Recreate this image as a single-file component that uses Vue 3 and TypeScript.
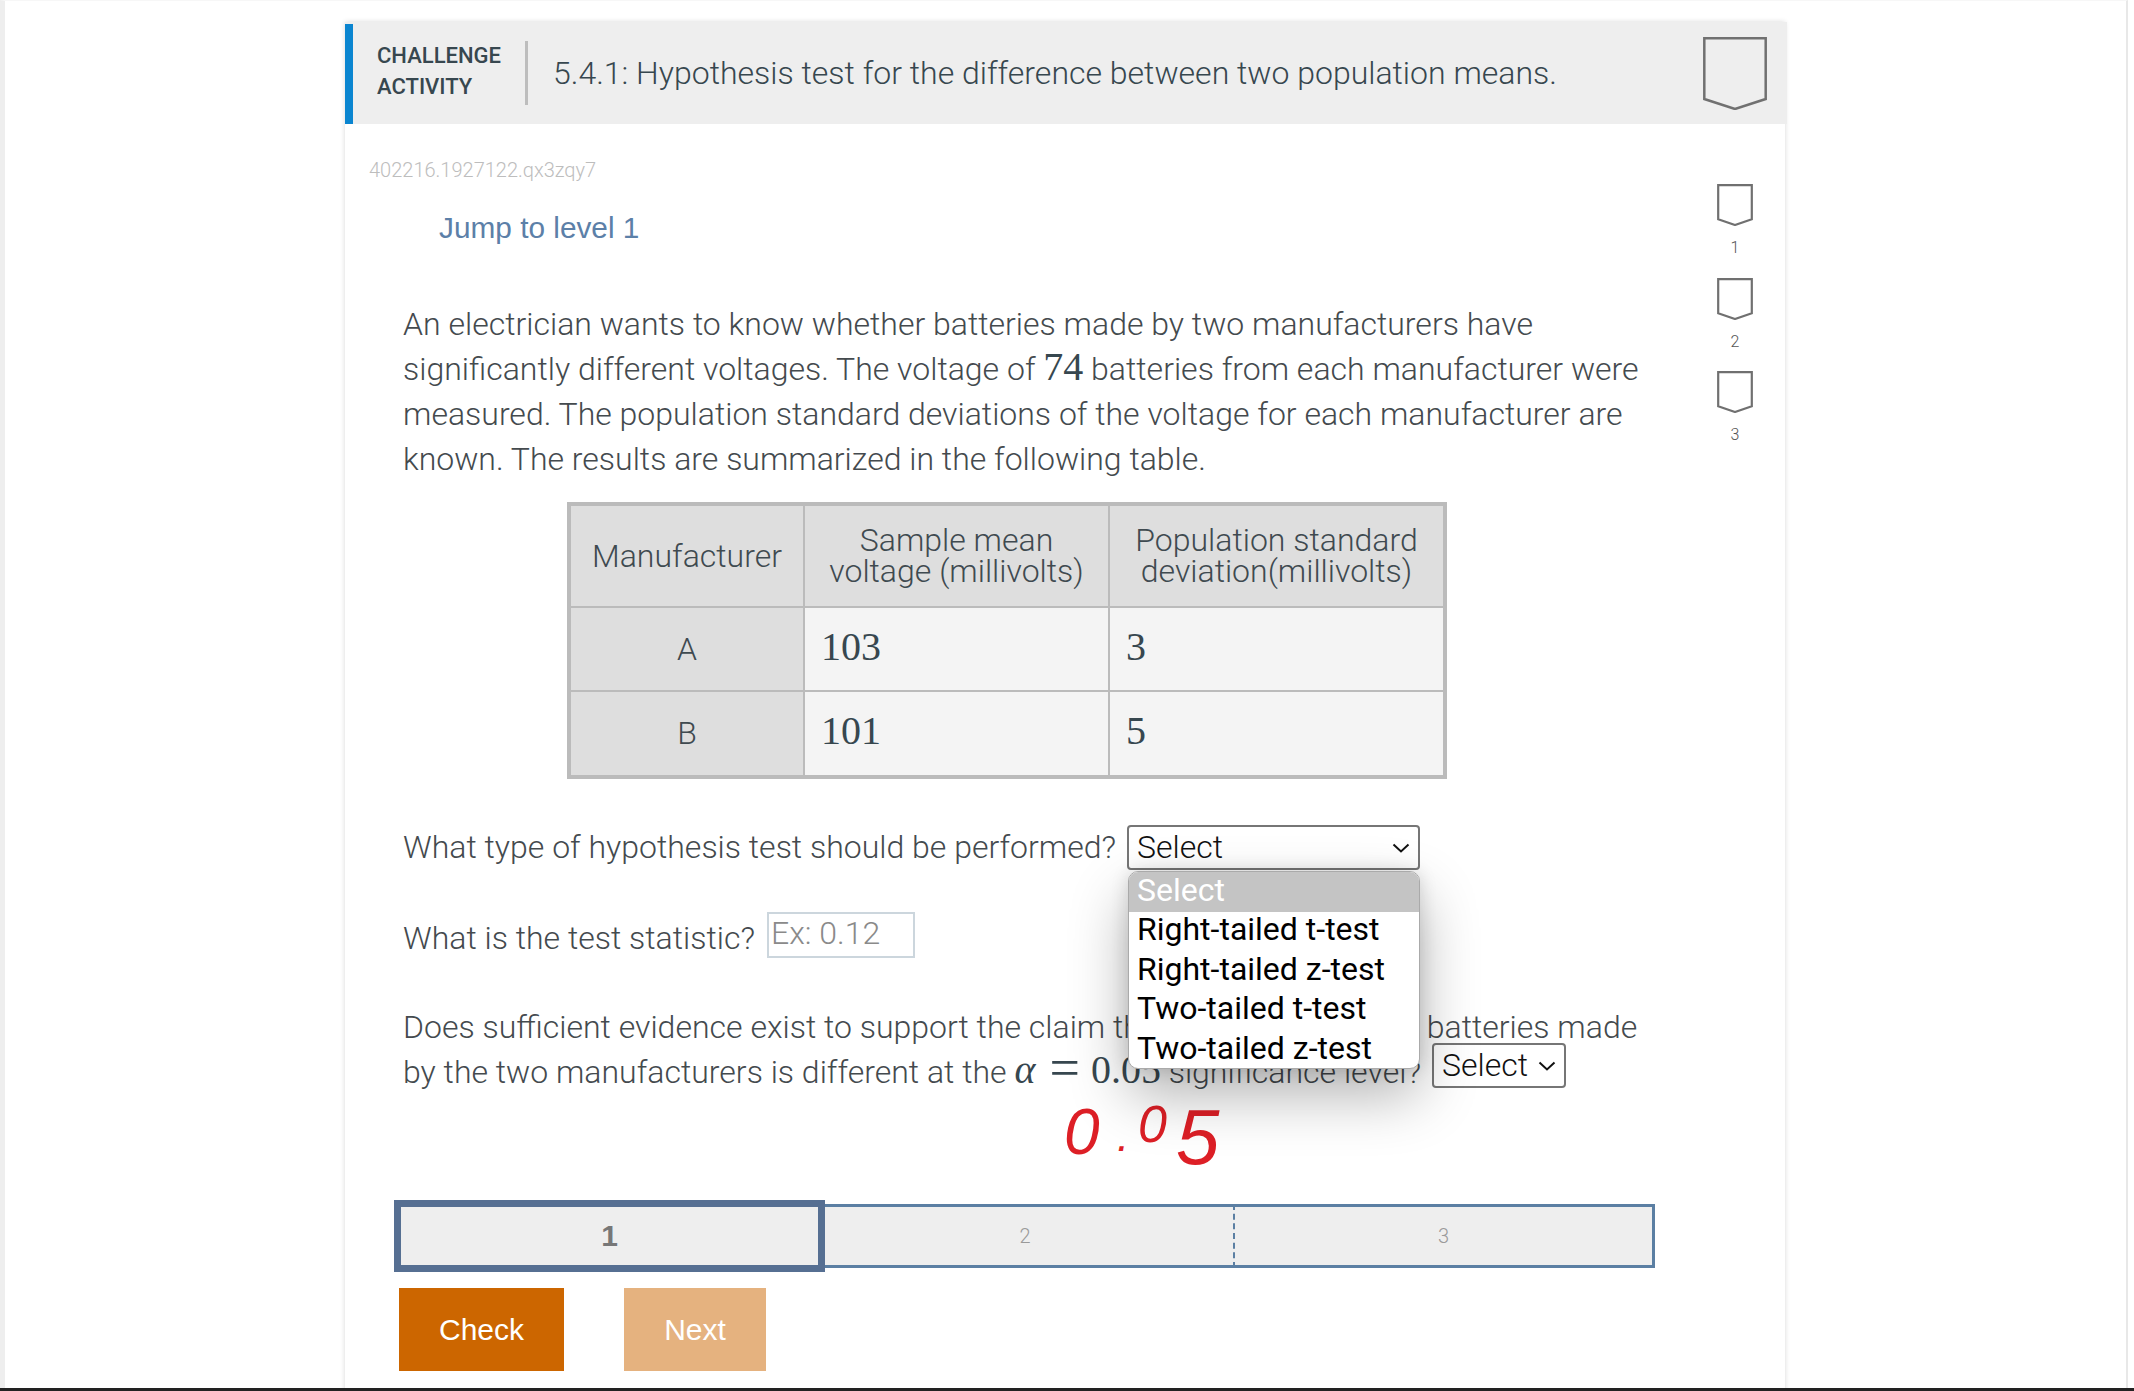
<script setup lang="ts">
const steps: string[] = ['1', '2', '3']
const options: string[] = ['Right-tailed t-test', 'Right-tailed z-test', 'Two-tailed t-test', 'Two-tailed z-test']
</script>

<template>
  <div class="page">
    <div class="sheet">
      <section class="card">
        <header class="head">
          <span class="accent"></span>
          <div class="kind">CHALLENGE<br />ACTIVITY</div>
          <span class="rule"></span>
          <h1 class="title">5.4.1: Hypothesis test for the difference between two population means.</h1>
          <svg class="badge-lg" viewBox="0 0 64 73" width="64" height="73">
            <path d="M1.3 1.3H62.7V62L32 72L1.3 62Z" fill="none" stroke="#707070" stroke-width="2.5" />
          </svg>
        </header>
        <div class="body">
          <main class="main">
            <div class="code">402216.1927122.qx3zqy7</div>
            <div class="jump">Jump to level 1</div>
            <div class="content">
              <p class="para">An electrician wants to know whether batteries made by two manufacturers have significantly different voltages. The voltage of <span class="math">74</span> batteries from each manufacturer were measured. The population standard deviations of the voltage for each manufacturer are known. The results are summarized in the following table.</p>
              <table class="data">
                <thead>
                  <tr>
                    <th class="c1">Manufacturer</th>
                    <th class="c2">Sample mean<br />voltage (millivolts)</th>
                    <th class="c3">Population standard<br />deviation(millivolts)</th>
                  </tr>
                </thead>
                <tbody>
                  <tr class="r1"><th>A</th><td><span class="num">103</span></td><td><span class="num">3</span></td></tr>
                  <tr class="r2"><th>B</th><td><span class="num">101</span></td><td><span class="num">5</span></td></tr>
                </tbody>
              </table>
              <div class="q q1">
                <span>What type of hypothesis test should be performed?</span>
                <div class="select-wrap">
                  <span class="select wide">Select
                    <svg class="chev" viewBox="0 0 18 10" width="18" height="10"><path d="M1.5 1.5L9 8.5L16.5 1.5" fill="none" stroke="#111" stroke-width="2" /></svg>
                  </span>
                  <ul class="menu">
                    <li class="picked">Select</li>
                    <li v-for="o in options" :key="o">{{ o }}</li>
                  </ul>
                </div>
              </div>
              <div class="q q2">
                <span class="q2-label">What is the test statistic?</span>
                <input class="field" type="text" placeholder="Ex: 0.12" />
              </div>
              <p class="para q3">Does sufficient evidence exist to support the claim that the voltage of the batteries made by the two manufacturers is different at the <span class="math it">α</span><span class="math eq">=</span><span class="math">0.05</span> significance level?<span class="select small">Select
                  <svg class="chev" viewBox="0 0 18 10" width="18" height="10"><path d="M1.5 1.5L9 8.5L16.5 1.5" fill="none" stroke="#111" stroke-width="2" /></svg>
                </span></p>
              <div class="ink" aria-label="handwritten note">
                <span class="i0">0</span><span class="idot">.</span><span class="i1">0</span><span class="i5">5</span>
              </div>
            </div>
            <div class="progress">
              <div class="seg active">1</div>
              <div class="seg s2">2</div>
              <div class="seg s3">3</div>
            </div>
            <div class="actions">
              <button class="btn check">Check</button>
              <button class="btn next">Next</button>
            </div>
          </main>
          <aside class="side">
            <div v-for="s in steps" :key="s" class="step">
              <svg viewBox="0 0 36 42" width="36" height="42">
                <path d="M1.2 1.2H34.8V35.2L18 41L1.2 35.2Z" fill="none" stroke="#707070" stroke-width="2.2" />
              </svg>
              <span class="step-n">{{ s }}</span>
            </div>
          </aside>
        </div>
      </section>
    </div>
    <div class="black"></div>
  </div>
</template>

<style>
html, body { margin: 0; background: #fff; }
</style>

<style scoped>
.page {
  width: 2134px;
  height: 1391px;
  display: flex;
  flex-direction: column;
  overflow: hidden;
  font-family: Roboto, "Liberation Sans", sans-serif;
  font-weight: 300;
  color: #444a4e;
  background: #fff;
}
.sheet {
  flex: 1;
  min-height: 0;
  margin: 0 6px 0 0;
  padding: 21px 0 0 340px;
  background: #fff;
  border-top: 1px solid #f7f7f7;
  border-left: 5px solid #eeeeee;
  border-right: 2px solid #e8e8e8;
  overflow: hidden;
}
.card {
  width: 1440px;
  height: 1400px;
  background: #fff;
  box-shadow: 0 0 5px rgba(0, 0, 0, 0.16);
}
.head {
  height: 102px;
  width: 1442px;
  background: #eeeeee;
  display: flex;
  align-items: center;
}
.accent { align-self: stretch; width: 8px; margin-top: 2px; background: #0a85d0; }
.kind {
  margin: 0 0 5px 24px;
  width: 124px;
  font-size: 22px;
  font-weight: 500;
  line-height: 31px;
  color: #37474f;
  white-space: nowrap;
}
.rule { width: 3px; height: 64px; margin-left: 24px; background: #bdbdbd; }
.title {
  flex: 1;
  margin: 0 0 0 25px;
  font-size: 32px;
  font-weight: 300;
  line-height: 45px;
  color: #37474f;
  white-space: nowrap;
}
.badge-lg { align-self: flex-start; margin: 15px 20px 0 0; flex: none; }
.body { display: flex; }
.main { flex: 1; min-width: 0; padding-left: 24px; }
.code {
  margin-top: 32px;
  font-size: 20px;
  line-height: 28px;
  color: #bdbdbd;
}
.jump {
  margin: 27px 0 0 70px;
  font-family: "Liberation Sans", Arial, sans-serif;
  font-weight: 400;
  font-size: 29.8px;
  line-height: 34px;
  color: #5c80a8;
}
.content { position: relative; margin: 57px 0 0 34px; width: 1250px; font-size: 32px; line-height: 45px; }
.para { margin: 0; }
.math {
  font-family: "Liberation Serif", "Times New Roman", serif;
  font-weight: 400;
  font-size: 40px;
  line-height: 0;
  color: #37474f;
}
.it { font-style: italic; }
.eq { font-size: 54px; margin: 0 11px 0 14px; vertical-align: -3px; }
.data {
  margin: 20px 0 0 164px;
  width: 880px;
  table-layout: fixed;
  border-collapse: collapse;
  border: 4px solid #bbbbbb;
  background: #f4f4f4;
}
.data th, .data td { border: 2px solid #bbbbbb; padding: 0; font-weight: 300; }
.data th { background: #dedede; text-align: center; color: #3f4a50; }
.data thead th { height: 100px; line-height: 31px; }
.c1 { width: 232px; }
.c2 { width: 303px; }
.data .r1 th, .data .r1 td { height: 82px; }
.data .r2 th, .data .r2 td { height: 83px; }
.data td { padding-left: 16px; }
.num {
  font-family: "Liberation Serif", "Times New Roman", serif;
  font-weight: 400;
  font-size: 40px;
  line-height: 1;
  color: #37474f;
}
.q { display: flex; align-items: center; gap: 12px; white-space: nowrap; }
.q1 { margin-top: 46px; height: 45px; gap: 11px; }
.q2 { margin-top: 42px; height: 46px; }
.q2-label { margin-top: 6px; }
.select-wrap { position: relative; }
.select {
  display: inline-flex;
  box-sizing: border-box;
  align-items: center;
  justify-content: space-between;
  height: 45px;
  padding: 0 8px 0 8px;
  border: 2px solid #767676;
  border-radius: 4px;
  background: #fff;
  color: #111;
  line-height: 41px;
  font-size: 32px;
}
.wide { width: 293px; }
.small { width: 134px; margin: -12px 0 -12px 11px; vertical-align: 7px; }
.menu {
  position: absolute;
  left: 1px;
  top: 46px;
  width: 292px;
  box-sizing: border-box;
  height: 198px;
  margin: 0;
  padding: 0;
  list-style: none;
  overflow: hidden;
  background: #fff;
  border-radius: 10px;
  border: 1px solid #aaa;
  font-size: 32px;
  font-weight: 400;
  color: #000;
  box-shadow: 0 26px 58px rgba(0, 0, 0, 0.3), 0 0 18px rgba(0, 0, 0, 0.14);
  z-index: 3;
}
.menu li { height: 39.5px; line-height: 35.5px; padding-left: 8px; }
.menu .picked { height: 40px; line-height: 37px; background: #c4c4c4; color: #fff; }
.field {
  box-sizing: border-box;
  width: 148px;
  height: 46px;
  padding: 0 2px 4px;
  border: 2px solid #ccd6dd;
  background: #fff;
  outline: none;
  font-family: inherit;
  font-weight: 300;
  font-size: 32px;
}
.field::placeholder { color: #8a8a8a; opacity: 1; }
.q3 { margin-top: 47px; }
.ink {
  position: absolute;
  left: 661px;
  top: 798px;
  display: flex;
  align-items: flex-start;
  font-family: "Liberation Sans", Arial, sans-serif;
  font-style: italic;
  font-weight: 400;
  color: #dd1f26;
  line-height: 1;
  z-index: 2;
}
.i0 { font-size: 64px; width: 53px; }
.idot { font-size: 44px; width: 21px; margin-top: 14px; }
.i1 { font-size: 52px; width: 38px; margin-top: -2px; }
.i5 { font-size: 78px; margin-top: -2px; }
.progress { display: flex; align-items: center; height: 72px; margin: 105px 0 0 25px; width: 1261px; }
.seg {
  box-sizing: border-box;
  display: flex;
  align-items: center;
  justify-content: center;
  background: #eeeeee;
  height: 64px;
  border: solid #5b7fa3;
  border-width: 3px 0;
  font-size: 20px;
  color: #9a9a9a;
}
.active {
  position: relative;
  z-index: 1;
  width: 431px;
  height: 72px;
  border: 7px solid #566f92;
  font-family: "Liberation Sans", Arial, sans-serif;
  font-weight: 700;
  font-size: 30px;
  color: #777;
}
.s2 { width: 418px; margin-left: -8px; border-right: 2px dashed #5b7fa3; }
.s3 { width: 420px; border-right-width: 3px; }
.actions { display: flex; gap: 60px; margin: 16px 0 0 30px; }
.btn {
  height: 83px;
  border: 0;
  padding: 0;
  font-family: "Liberation Sans", Arial, sans-serif;
  font-size: 30px;
  color: #fff;
}
.check { width: 165px; background: #cc6600; }
.next { width: 142px; background: #e5b27f; }
.side { width: 70px; margin-right: 15px; flex: none; padding-top: 60px; }
.step { height: 93.5px; display: flex; flex-direction: column; align-items: center; }
.step-n { margin-top: 12px; font-size: 16px; line-height: 20px; color: #555; }
.black { height: 3px; background: #222; flex: none; }
</style>
